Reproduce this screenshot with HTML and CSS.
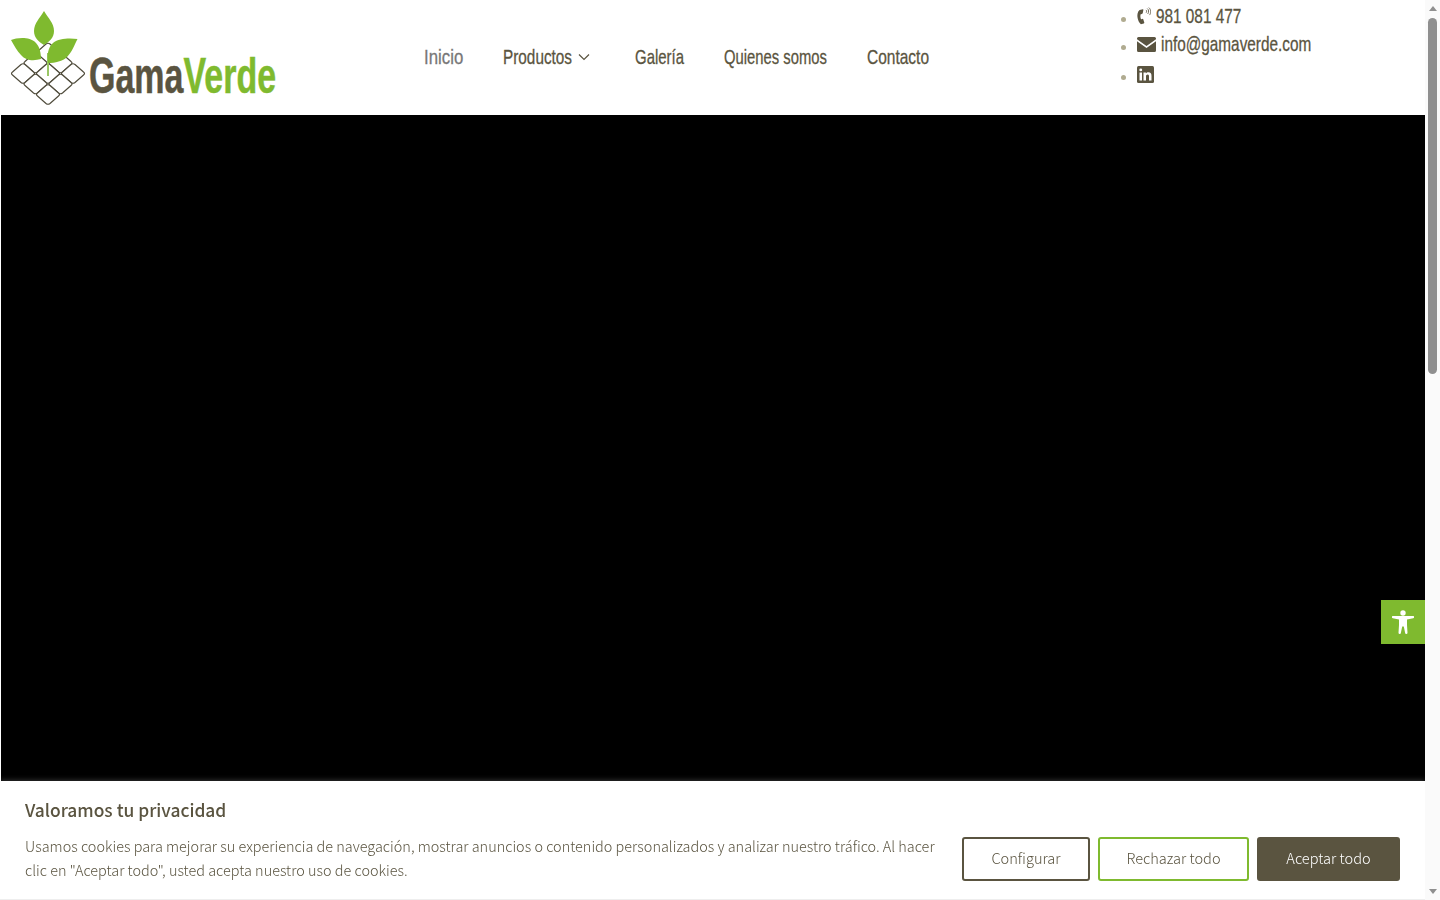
FILE: index.html
```html
<!DOCTYPE html>
<html lang="es">
<head>
  <meta charset="UTF-8" />
  <meta name="viewport" content="width=device-width, initial-scale=1.0" />
  <title>GamaVerde</title>
  <link rel="stylesheet" href="styles.css">
</head>
<body>

<div class="pagina">
  <header class="cabecera">
    <a class="logo" href="#">
      <svg class="logo-marca" width="78" height="98" viewBox="10 8 78 98">
        <defs>
          <path id="rombo" d="M-2-9Q0-10.500 2-9L10.500-1.500Q12.500 0 10.500 1.500L2 9Q0 10.500-2 9L-10.500 1.500Q-12.500 0-10.500-1.500Z" />
        </defs>
        <!-- malla -->
        <g fill="#fff" stroke="#4f4b3b" stroke-width="1.200">
          <use href="#rombo" x="48" y="52" />
          <use href="#rombo" x="35.500" y="62" />
          <use href="#rombo" x="60.500" y="62" />
          <use href="#rombo" x="23" y="72.500" />
          <use href="#rombo" x="48" y="72.500" />
          <use href="#rombo" x="73" y="72.500" />
          <use href="#rombo" x="35.500" y="83" />
          <use href="#rombo" x="60.500" y="83" />
          <use href="#rombo" x="48" y="93.500" />
        </g>
        <!-- hojas -->
        <g fill="#7fba2f">
          <rect x="47" y="52" width="2" height="23" fill="#9ac765" />
          <path d="M44 10c4 7 10 12 10 20 0 7-5 11-10 14-5-3-10-7-10-14 0-8 6-13 10-20z" />
          <path d="M11 39C17 37 29 35 36 42C40 46 41 53 41 58C34 60 26 60 21 54C17 50 14 44 11 39z" />
          <path d="M77.500 38C70 37 59 37 53 42C48 46 47 54 48 62C55 62 63 60 67 56C72 51 74 45 77.500 38z" />
        </g>
      </svg>
      <span class="logo-texto">Gama<span class="logo-verde">Verde</span></span>
    </a>

    <nav class="menu">
      <a class="menu-item m-inicio activo" href="#"><span>Inicio</span></a>
      <a class="menu-item m-productos" href="#"><span>Productos</span></a>
      <svg class="menu-flecha" width="14" height="14" viewBox="0 0 14 14" fill="none" stroke="#5a5440" stroke-width="1.200"><path d="M2 4.500l5 5 5-5" /></svg>
      <a class="menu-item m-galeria" href="#"><span>Galería</span></a>
      <a class="menu-item m-quienes" href="#"><span>Quienes somos</span></a>
      <a class="menu-item m-contacto" href="#"><span>Contacto</span></a>
    </nav>

    <ul class="contacto">
      <li>
        <svg class="icono-tel" width="14" height="18" viewBox="0 0 15 18" fill="#5a5440">
          <path d="M6.200 1.800L2.800 2.700C.4 4.500 0 8.500.7 11.500c.6 2.600 1.700 5 3.500 6.300l3-.8c.6-.2.800-.6.600-1.100L6.700 12.600c-.1-.4-.5-.6-1-.5l-1.400.4C3.600 10.900 3.400 8.700 3.900 7.100l1.400-.3c.5-.1.800-.5.900-1l.6-3.300c.1-.5 0-.8-.6-.7z" />
          <path d="M9.500 2.500c1 .6 1 2 .3 3M11 1c1.800 1.200 1.800 4 .5 5.800M12.700 0c2.400 2 2.400 6 .7 8" fill="none" stroke="#5a5440" stroke-width=".9" />
        </svg>
        <span class="contacto-texto">981 081 477</span>
      </li>
      <li>
        <svg width="19" height="15" viewBox="0 0 19 15" fill="#5a5440">
          <path d="M1.500 0h16A1.500 1.500 0 0 1 19 1.500v.8L9.500 9 0 2.300v-.8A1.500 1.500 0 0 1 1.500 0z" />
          <path d="M0 4.300l9.500 6.700L19 4.300v9.200a1.500 1.500 0 0 1-1.500 1.500h-16A1.500 1.500 0 0 1 0 13.500z" />
        </svg>
        <span class="contacto-texto">info@gamaverde.com</span>
      </li>
      <li>
        <svg width="17" height="17" viewBox="0 0 17 17">
          <rect width="17" height="17" rx="1.500" fill="#5a5440" />
          <g fill="#fff">
            <rect x="2.500" y="6.500" width="2.500" height="8" />
            <circle cx="3.750" cy="3.900" r="1.450" />
            <path d="M6.500 6.500h2.400v1.100c.5-.8 1.400-1.300 2.500-1.300 2.300 0 3.100 1.400 3.100 3.600v4.600H12v-4c0-1.100-.3-1.900-1.300-1.900s-1.700.7-1.700 1.900v4H6.500z" />
          </g>
        </svg>
      </li>
    </ul>
  </header>

  <section class="video"></section>
</div>

<a class="accesibilidad" href="#" aria-label="Accesibilidad">
  <svg width="22" height="24" viewBox="0 0 22 24" fill="#fff">
    <circle cx="11" cy="3" r="2.700" />
    <path d="M1 6h20a1 1 0 0 1 .2 2.200L15 9.500v5.500l.5 7.800a1.200 1.200 0 0 1-2.400 0l-1.300-6.300h-1.600L8.900 22.800a1.200 1.200 0 0 1-2.400 0L7 15V9.500L.8 8.200A1 1 0 0 1 1 6z" />
  </svg>
</a>

<div class="cookies">
  <div class="cookies-texto">
    <h3>Valoramos tu privacidad</h3>
    <p>Usamos cookies para mejorar su experiencia de navegación, mostrar anuncios o contenido personalizados y analizar nuestro tráfico. Al hacer clic en "Aceptar todo", usted acepta nuestro uso de cookies.</p>
  </div>
  <div class="cookies-botones">
    <button class="btn-cookie btn-configurar">Configurar</button>
    <button class="btn-cookie btn-rechazar">Rechazar todo</button>
    <button class="btn-cookie btn-aceptar">Aceptar todo</button>
  </div>
</div>

<!-- barra de desplazamiento -->
<div class="barra">
  <span class="barra-arriba"></span>
  <span class="barra-pulgar"></span>
  <span class="barra-abajo"></span>
</div>

</body>
</html>
```

FILE: styles.css
```css
body {
  margin: 0;
  font-family: "Noto Sans CJK KR", "Noto Sans", sans-serif;
  background-color: white;
  color: #5a5440;
  overflow: hidden;
}

a {
  color: inherit;
  text-decoration: none;
}

.pagina {
  height: 900px;
  margin-right: 15px;
  overflow: hidden;
}

.cabecera {
  display: flex;
  align-items: center;
  height: 115px;
  padding-left: 10px;
}

.logo {
  display: flex;
  align-items: flex-end;
  width: 265px;
  height: 98px;
  flex: none;
}

.logo-marca {
  flex: none;
  margin-right: 1px;
}

.logo-texto {
  font-family: "Liberation Sans", sans-serif;
  font-weight: bold;
  font-size: 50px;
  line-height: 56px;
  margin-bottom: 3px;
  white-space: nowrap;
  -webkit-text-stroke: 0.5px;
  transform: scaleX(0.68);
  transform-origin: left;
}

.logo-verde {
  color: #7fba2f;
}

.menu {
  display: flex;
  align-items: center;
  margin-left: 149px;
  margin-bottom: 2px;
  font-family: "Liberation Sans", sans-serif;
  font-size: 21px;
  -webkit-text-stroke: 0.3px;
}

.menu-item {
  display: block;
  margin-right: 40px;
  white-space: nowrap;
}

/* la fuente condensada del original no existe aqui: se estrecha cada texto */
.menu-item span {
  display: inline-block;
  transform: scaleX(var(--escala));
  transform-origin: left;
}

.m-inicio { width: 39px; --escala: 0.8; }
.m-productos { width: 69px; margin-right: 5px; --escala: 0.73; }
.m-galeria { width: 49px; --escala: 0.712; }
.m-quienes { width: 103px; --escala: 0.705; }
.m-contacto { width: 62px; margin-right: 0; --escala: 0.738; }

.menu-flecha {
  margin-right: 44px;
}

.activo {
  color: #777;
}

.contacto {
  margin: 0 0 0 auto;
  padding: 2px 0 0;
  width: 288px;
  align-self: flex-start;
  list-style: none;
  font-family: "Liberation Sans", sans-serif;
  font-size: 21px;
  -webkit-text-stroke: 0.3px;
}

.contacto li {
  position: relative;
  display: flex;
  align-items: center;
  gap: 5px;
  height: 28px;
}

.contacto li:before {
  content: "";
  position: absolute;
  left: -16px;
  top: 15px;
  width: 5px;
  height: 5px;
  border-radius: 50%;
  background-color: #b0ab90;
}

.contacto li:last-child {
  margin-top: 2px;
}

.contacto-texto {
  display: inline-block;
  white-space: nowrap;
  transform: scaleX(0.73);
  transform-origin: left;
}

.video {
  margin-left: 1px;
  height: 785px;
  background-color: black;
}

.accesibilidad {
  position: fixed;
  right: 15px;
  top: 600px;
  width: 44px;
  height: 44px;
  display: flex;
  justify-content: center;
  align-items: center;
  background-color: #7fba2f;
}

.cookies {
  position: fixed;
  left: 0;
  right: 15px;
  bottom: 0;
  height: 119px;
  display: flex;
  align-items: flex-end;
  justify-content: space-between;
  box-sizing: border-box;
  padding: 0 25px 18px;
  background: white;
  border-bottom: 1px solid #eee;
  box-shadow: 0 -1px 5px rgba(255,255,255,0.2);
}

.cookies-texto {
  width: 920px;
}

.cookies-texto h3 {
  margin: 0 0 11px;
  font-size: 17.4px;
  line-height: 26px;
  font-weight: 500;
}

.cookies-texto p {
  margin: 0 0 -1px;
  font-size: 14.45px;
  line-height: 24px;
  font-weight: 300;
}

.cookies-botones {
  display: flex;
  gap: 8px;
}

.btn-cookie {
  height: 44px;
  padding: 0 0 3px;
  font-family: inherit;
  font-size: 14.6px;
  font-weight: 300;
  color: #5a5440;
  background: white;
  border: 2px solid #5a5440;
  border-radius: 3px;
  cursor: pointer;
}

.btn-configurar {
  width: 128px;
}

.btn-rechazar {
  width: 151px;
  border-color: #7fba2f;
}

.btn-aceptar {
  width: 143px;
  color: white;
  background-color: #5a5440;
}

.barra {
  position: fixed;
  top: 0;
  right: 0;
  bottom: 0;
  width: 15px;
  display: flex;
  flex-direction: column;
  align-items: center;
  background-color: #fafafa;
}

.barra-pulgar {
  width: 9px;
  height: 356px;
  margin-top: 7px;
  border-radius: 5px;
  background-color: #8f8f8f;
}

.barra-arriba, .barra-abajo {
  width: 0;
  height: 0;
  border-left: 4.500px solid transparent;
  border-right: 4.500px solid transparent;
}

.barra-arriba {
  margin-top: 6px;
  border-bottom: 5px solid #8f8f8f;
}

.barra-abajo {
  margin-top: auto;
  margin-bottom: 6px;
  border-top: 5px solid #8f8f8f;
}
```
